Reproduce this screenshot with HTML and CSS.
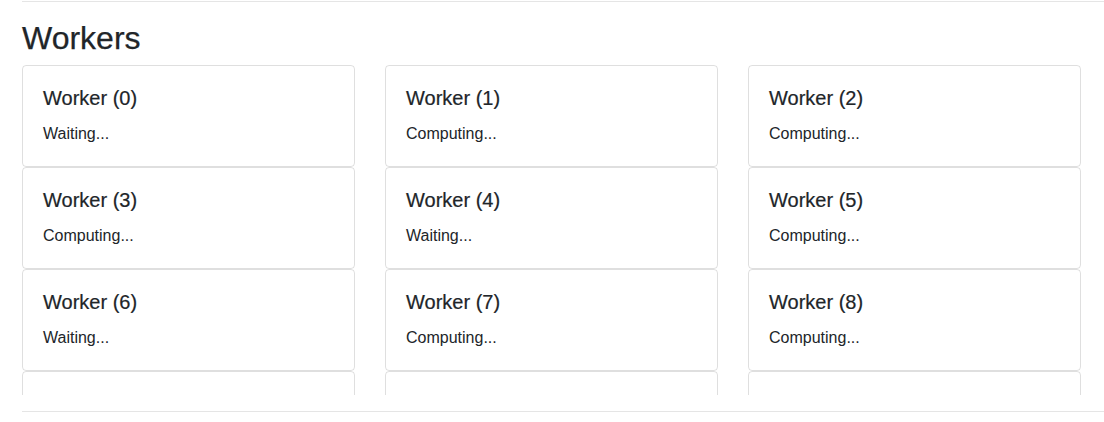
FILE: index.html
```html
<!DOCTYPE html>
<html lang="en">
<head>
<meta charset="utf-8">
<title>Workers</title>
<link rel="stylesheet" href="styles.css">
</head>
<body>
<div class="page">
  <hr class="rule rule-top">
  <h2 class="heading">Workers</h2>
  <div class="workers">
    <div class="grid">
      <div class="card"><h5 class="card-title">Worker (0)</h5><p class="card-text">Waiting...</p></div>
      <div class="card"><h5 class="card-title">Worker (1)</h5><p class="card-text">Computing...</p></div>
      <div class="card"><h5 class="card-title">Worker (2)</h5><p class="card-text">Computing...</p></div>
      <div class="card"><h5 class="card-title">Worker (3)</h5><p class="card-text">Computing...</p></div>
      <div class="card"><h5 class="card-title">Worker (4)</h5><p class="card-text">Waiting...</p></div>
      <div class="card"><h5 class="card-title">Worker (5)</h5><p class="card-text">Computing...</p></div>
      <div class="card"><h5 class="card-title">Worker (6)</h5><p class="card-text">Waiting...</p></div>
      <div class="card"><h5 class="card-title">Worker (7)</h5><p class="card-text">Computing...</p></div>
      <div class="card"><h5 class="card-title">Worker (8)</h5><p class="card-text">Computing...</p></div>
      <div class="card"></div>
      <div class="card"></div>
      <div class="card"></div>
    </div>
  </div>
  <hr class="rule rule-bottom">
</div>
</body>
</html>
```

FILE: styles.css
```css
html, body {
  margin: 0;
  padding: 0;
  background: #fff;
}

body {
  font-family: "Liberation Sans", Arial, sans-serif;
  color: #212529;
  font-size: 16px;
  line-height: 1.5;
  overflow: hidden;
}

.page {
  padding-left: 22px;
}

.rule {
  border: 0;
  border-top: 1px solid rgba(0, 0, 0, 0.1);
  height: 0;
}

.rule-top {
  margin: 1px 0 17px 0;
}

.rule-bottom {
  margin: 16px 0 0 0;
}

.heading {
  font-size: 32px;
  font-weight: 500;
  line-height: 1.2;
  margin: 0 0 8px 0;
  -webkit-text-stroke: 0.25px #212529;
}

.workers {
  height: 330px;
  overflow: hidden;
  width: 1059px;
}

.grid {
  display: grid;
  grid-template-columns: repeat(3, 333px);
  column-gap: 30px;
  row-gap: 0;
}

.card {
  border: 1px solid rgba(0, 0, 0, 0.125);
  border-radius: 4px;
  padding: 20px;
  height: 102px;
  box-sizing: border-box;
}

.card-title {
  font-size: 20px;
  font-weight: 500;
  line-height: 1.2;
  margin: 0 0 12px 0;
  -webkit-text-stroke: 0.2px #212529;
}

.card-text {
  margin: 0;
  font-size: 16px;
  line-height: 24px;
}
```
